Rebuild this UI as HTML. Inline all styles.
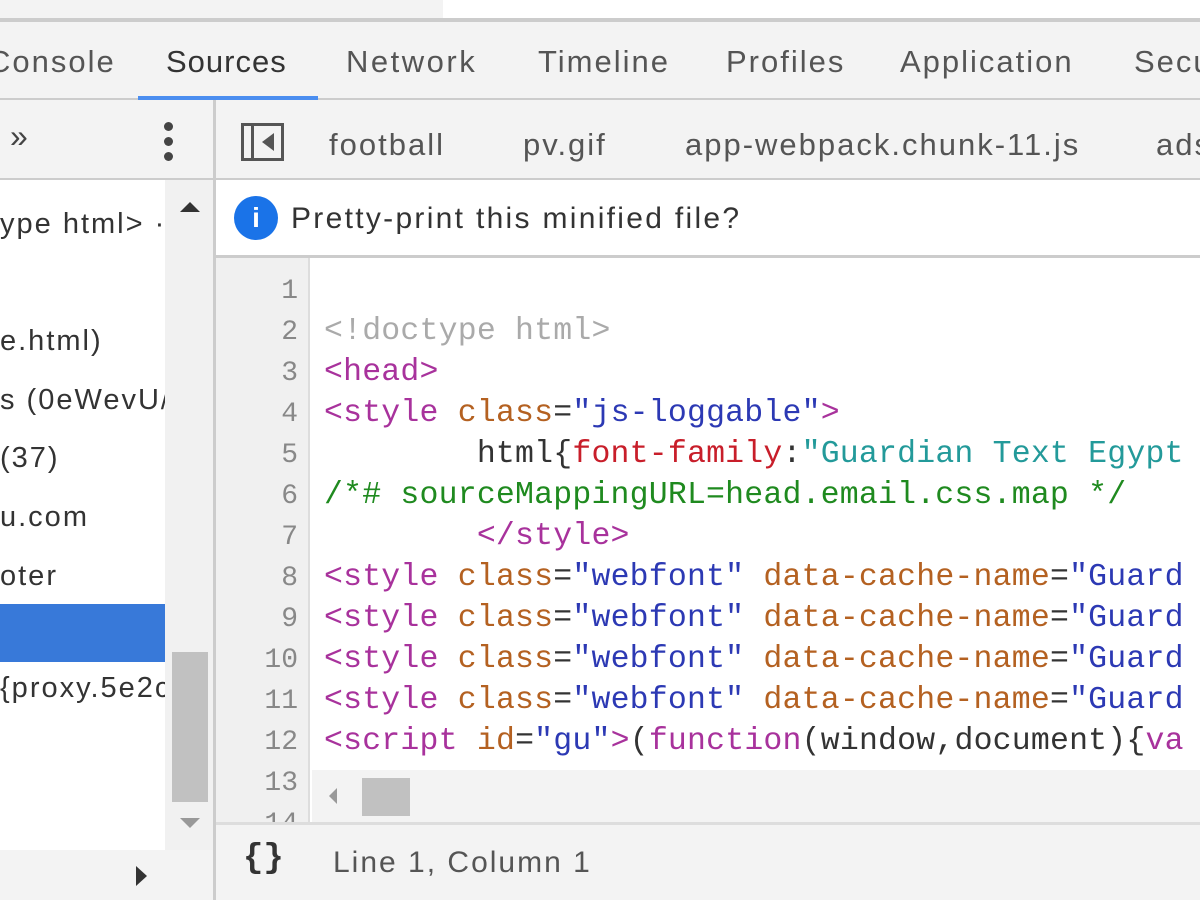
<!DOCTYPE html>
<html><head><style>
body{margin:0;width:1200px;height:900px;overflow:hidden;background:#fff;position:relative;font-family:"Liberation Sans","DejaVu Sans",sans-serif;color:#333;letter-spacing:2px}
div{position:absolute;box-sizing:border-box}
.t{font-size:31px;color:#555;top:44px;white-space:nowrap}
.l{font-size:29px;color:#333;left:0;white-space:nowrap}
.n{font-family:"Liberation Mono",monospace;font-size:28px;color:#888;right:0;width:84px;text-align:right;letter-spacing:0}
.c{font-family:"Liberation Mono",monospace;font-size:31.5px;left:324px;white-space:pre;letter-spacing:.2px}
.tg{color:#a8329c}.at{color:#b46121}.st{color:#2c39b4}.cm{color:#1f8a1f}.gy{color:#aaa}.pr{color:#c81e2a}.sv{color:#239a9a}
</style></head><body>
<div style="left:0;top:0;width:443px;height:18px;background:#f3f3f3"></div>
<div style="left:0;top:18px;width:1200px;height:4px;background:#ccc"></div>
<div style="left:0;top:22px;width:1200px;height:78px;background:#f3f3f3;border-bottom:2px solid #ccc"></div>
<div class="t" style="left:-12px">Console</div>
<div class="t" style="left:166px;color:#333;letter-spacing:1px">Sources</div>
<div class="t" style="left:346px;letter-spacing:2.5px">Network</div>
<div class="t" style="left:538px">Timeline</div>
<div class="t" style="left:726px">Profiles</div>
<div class="t" style="left:900px">Application</div>
<div class="t" style="left:1134px">Secu</div>
<div style="left:138px;top:96px;width:180px;height:4px;background:#4b8ef0"></div>
<div style="left:0;top:100px;width:214px;height:80px;background:#f3f3f3;border-bottom:2px solid #ccc"></div>
<div style="left:10px;top:118px;font-size:32px;color:#444">»</div>
<div style="left:164px;top:122px;width:9px;height:9px;border-radius:50%;background:#444"></div>
<div style="left:164px;top:137px;width:9px;height:9px;border-radius:50%;background:#444"></div>
<div style="left:164px;top:152px;width:9px;height:9px;border-radius:50%;background:#444"></div>
<div style="left:165px;top:180px;width:48px;height:670px;background:#f1f1f1"></div>
<div style="left:180px;top:202px;width:0;height:0;border-left:10px solid transparent;border-right:10px solid transparent;border-bottom:10px solid #333"></div>
<div style="left:180px;top:818px;width:0;height:0;border-left:10px solid transparent;border-right:10px solid transparent;border-top:10px solid #999"></div>
<div style="left:172px;top:652px;width:36px;height:150px;background:#c1c1c1"></div>
<div style="left:0;top:604px;width:165px;height:58px;background:#3879d9"></div>
<div class="l" style="top:208px">ype html> ·</div>
<div class="l" style="top:325px">e.html)</div>
<div class="l" style="top:384px;width:165px;overflow:hidden">s (0eWevU/</div>
<div class="l" style="top:442px">(37)</div>
<div class="l" style="top:501px">u.com</div>
<div class="l" style="top:560px">oter</div>
<div class="l" style="top:672px;width:165px;overflow:hidden">{proxy.5e2c</div>
<div style="left:0;top:850px;width:214px;height:50px;background:#f3f3f3"></div>
<div style="left:136px;top:866px;width:0;height:0;border-top:10px solid transparent;border-bottom:10px solid transparent;border-left:11px solid #333"></div>
<div style="left:213px;top:100px;width:3px;height:800px;background:#ccc"></div>
<div style="left:216px;top:100px;width:984px;height:80px;background:#f3f3f3;border-bottom:2px solid #ccc"></div>
<div style="left:241px;top:123px;width:43px;height:38px;border:3px solid #555"></div>
<div style="left:251px;top:125px;width:3px;height:34px;background:#555"></div>
<div style="left:262px;top:133px;width:0;height:0;border-top:9px solid transparent;border-bottom:9px solid transparent;border-right:12px solid #555"></div>
<div class="t" style="left:329px;top:127px">football</div>
<div class="t" style="left:523px;top:127px">pv.gif</div>
<div class="t" style="left:685px;top:127px">app-webpack.chunk-11.js</div>
<div class="t" style="left:1156px;top:127px">ads</div>
<div style="left:216px;top:180px;width:984px;height:78px;background:#fff;border-bottom:3px solid #ccc"></div>
<div style="left:234px;top:196px;width:44px;height:44px;border-radius:50%;background:#1a73e8;color:#fff;font-weight:bold;font-size:28px;text-align:center;line-height:44px;letter-spacing:0">i</div>
<div style="left:291px;top:202px;font-size:30px;color:#333;letter-spacing:2.3px">Pretty-print this minified file?</div>
<div style="left:216px;top:258px;width:94px;height:567px;background:#f0f0f0;border-right:2px solid #ddd"></div>
<div style="left:216px;top:258px;width:94px;height:567px;overflow:hidden">
<div class="n" style="top:18px;right:12px">1</div>
<div class="n" style="top:59px;right:12px">2</div>
<div class="n" style="top:100px;right:12px">3</div>
<div class="n" style="top:141px;right:12px">4</div>
<div class="n" style="top:182px;right:12px">5</div>
<div class="n" style="top:223px;right:12px">6</div>
<div class="n" style="top:264px;right:12px">7</div>
<div class="n" style="top:305px;right:12px">8</div>
<div class="n" style="top:346px;right:12px">9</div>
<div class="n" style="top:387px;right:12px">10</div>
<div class="n" style="top:428px;right:12px">11</div>
<div class="n" style="top:469px;right:12px">12</div>
<div class="n" style="top:510px;right:12px">13</div>
<div class="n" style="top:551px;right:12px">14</div>
</div>
<div class="c gy" style="top:314px">&lt;!doctype html&gt;</div>
<div class="c tg" style="top:355px">&lt;head&gt;</div>
<div class="c" style="top:396px"><span class="tg">&lt;style</span> <span class="at">class</span>=<span class="st">"js-loggable"</span><span class="tg">&gt;</span></div>
<div class="c" style="top:437px">        html{<span class="pr">font-family</span>:<span class="sv">"Guardian Text Egypt</span></div>
<div class="c cm" style="top:478px">/*# sourceMappingURL=head.email.css.map */</div>
<div class="c tg" style="top:519px">        &lt;/style&gt;</div>
<div class="c" style="top:560px"><span class="tg">&lt;style</span> <span class="at">class</span>=<span class="st">"webfont"</span> <span class="at">data-cache-name</span>=<span class="st">"Guard</span></div>
<div class="c" style="top:601px"><span class="tg">&lt;style</span> <span class="at">class</span>=<span class="st">"webfont"</span> <span class="at">data-cache-name</span>=<span class="st">"Guard</span></div>
<div class="c" style="top:642px"><span class="tg">&lt;style</span> <span class="at">class</span>=<span class="st">"webfont"</span> <span class="at">data-cache-name</span>=<span class="st">"Guard</span></div>
<div class="c" style="top:683px"><span class="tg">&lt;style</span> <span class="at">class</span>=<span class="st">"webfont"</span> <span class="at">data-cache-name</span>=<span class="st">"Guard</span></div>
<div class="c" style="top:724px"><span class="tg">&lt;script</span> <span class="at">id</span>=<span class="st">"gu"</span><span class="tg">&gt;</span>(<span class="tg">function</span>(window,document){<span class="tg">va</span></div>
<div style="left:312px;top:770px;width:888px;height:53px;background:#f3f3f3"></div>
<div style="left:329px;top:788px;width:0;height:0;border-top:8px solid transparent;border-bottom:8px solid transparent;border-right:8px solid #999"></div>
<div style="left:362px;top:778px;width:48px;height:38px;background:#c1c1c1"></div>
<div style="left:216px;top:822px;width:984px;height:78px;background:#f3f3f3;border-top:3px solid #ddd"></div>
<div style="left:243px;top:840px;font-family:'Liberation Mono',monospace;font-size:34px;color:#333;font-weight:bold;letter-spacing:0">{}</div>
<div style="left:333px;top:846px;font-size:30px;color:#555">Line 1, Column 1</div>
</body></html>
